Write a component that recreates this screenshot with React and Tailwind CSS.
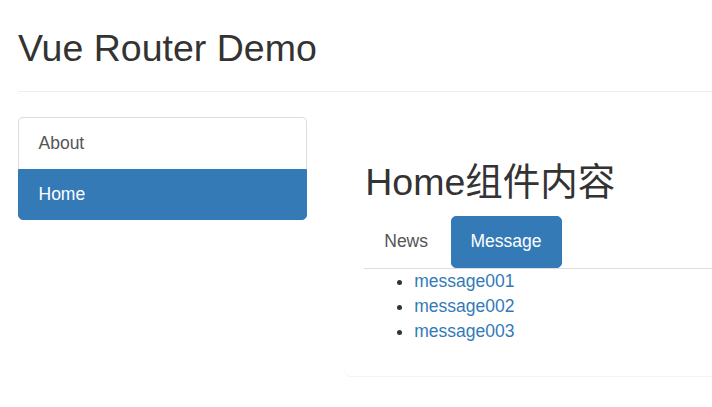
import React from 'react'

const FONT = { fontFamily: '"Liberation Sans", Arial, "Noto Sans CJK SC", sans-serif' }

const messages = ['message001', 'message002', 'message003']

export default function App() {
  return (
    <div className="w-[712px] h-[407px] overflow-hidden bg-white text-[#333] pl-[18px]" style={FONT}>
      {/* Page header */}
      <div className="w-[800px] pt-[28px] pb-[22px] border-b border-[#eee]">
        <h2 className="text-[37.5px] leading-[41px] font-normal">Vue Router Demo</h2>
      </div>

      <div className="flex items-start gap-[37.5px] mt-[25px] w-[800px]">
        {/* Sidebar */}
        <div className="w-[289px] shrink-0 text-[17.5px] leading-[25px]">
          <a className="block border border-b-0 border-[#ddd] rounded-t-[5px] pl-[19.5px] pr-[18.75px] pt-[12.5px] pb-[13.5px] text-[#555]">
            About
          </a>
          <a className="block border border-[#337ab7] bg-[#337ab7] rounded-b-[5px] pl-[19.5px] pr-[18.75px] pt-[12px] pb-[12px] text-white">
            Home
          </a>
        </div>

        {/* Content panel */}
        <div className="w-[420px] shrink-0 border border-transparent rounded-[5px] bg-white shadow-[0_1px_1px_rgba(0,0,0,0.05)] p-[18.75px]">
          <h2 className="mt-[25px] mb-[13px] pl-[1px] text-[37.5px] leading-[41px] font-normal">Home组件内容</h2>

          <div className="flex border-b border-[#ddd] text-[17.5px] leading-[25px]">
            <a className="mr-[2.5px] border border-transparent px-[19px] py-[12.5px] text-[#555]">News</a>
            <a className="border border-[#337ab7] bg-[#337ab7] rounded-[5px] px-[19px] py-[12.5px] text-white">Message</a>
          </div>

          <ul className="list-disc pl-[50px] mb-[12.5px] text-[17.5px] leading-[25px]">
            {messages.map((m) => (
              <li key={m}>
                <a className="text-[#337ab7]">{m}</a>
              </li>
            ))}
          </ul>
        </div>
      </div>
    </div>
  )
}
